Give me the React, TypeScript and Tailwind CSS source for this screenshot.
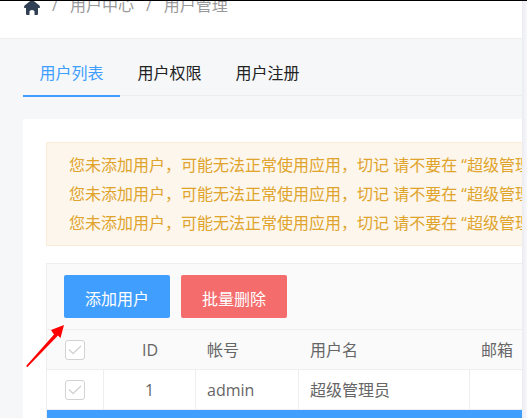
import { useState } from 'react';

type User = {
  id: number;
  account: string;
  name: string;
  email: string;
};

const TABS = ['用户列表', '用户权限', '用户注册'];

const NOTICES = [
  '您未添加用户，可能无法正常使用应用，切记 请不要在 “超级管理',
  '您未添加用户，可能无法正常使用应用，切记 请不要在 “超级管理',
  '您未添加用户，可能无法正常使用应用，切记 请不要在 “超级管理',
];

const USERS: User[] = [{ id: 1, account: 'admin', name: '超级管理员', email: '' }];

function HomeIcon() {
  return (
    <svg width="16" height="15" viewBox="0 0 16 15" fill="#304156" aria-hidden="true">
      <path d="M8 0Q8.600 0 9.200 .5L15.400 5.600Q16 6.200 16 7.200 16 8 15.200 8H14V14Q14 15 13 15H10.500V11.500Q10.500 10 8 10T5.500 11.500V15H3Q2 15 2 14V8H.8Q0 8 0 7.200 0 6.200 .6 5.600L6.800 .5Q7.400 0 8 0Z" />
    </svg>
  );
}

function RowCheckbox({ label }: { label: string }) {
  return (
    <label className="mx-auto grid size-5 place-items-center">
      <input
        type="checkbox"
        aria-label={label}
        className="col-start-1 row-start-1 size-5 appearance-none rounded-[3px] border border-[#d2d2d2] bg-white"
      />
      <svg
        width="14"
        height="10"
        viewBox="0 0 14 10"
        fill="none"
        stroke="#d2d2d2"
        strokeWidth="1.3"
        className="pointer-events-none col-start-1 row-start-1"
      >
        <path d="M1 4.500 5 8.500 13 1" />
      </svg>
    </label>
  );
}

export default function App() {
  const [activeTab, setActiveTab] = useState(0);

  return (
    <div className="flex min-h-screen flex-col border-t border-black bg-[#f5f7f9] font-['Open_Sans','Noto_Sans_CJK_SC',sans-serif] text-base text-[#666]">
      <div className="flex flex-1">
        <main className="min-w-0 flex-1 overflow-hidden">
          {/* Breadcrumb */}
          <header className="h-[38px] overflow-hidden border-b border-[#ebedef] bg-white pl-6">
            <nav className="-mt-2 flex h-6 items-center gap-3 whitespace-nowrap text-[#999]">
              <a href="#home" aria-label="首页" className="pt-1">
                <HomeIcon />
              </a>
              <span>/</span>
              <a href="#center">用户中心</a>
              <span>/</span>
              <a href="#users">用户管理</a>
            </nav>
          </header>

          <div className="pl-[23px]">
            {/* Tabs */}
            <div className="mt-3 flex h-[45px] gap-px border-b border-[#ebedef]">
              {TABS.map((tab, i) => (
                <button
                  key={tab}
                  type="button"
                  onClick={() => setActiveTab(i)}
                  className={
                    activeTab === i
                      ? 'h-[46px] w-[97px] border-b-2 border-[#409eff] text-[#409eff]'
                      : 'h-[46px] w-[97px] border-b-2 border-transparent text-[#222]'
                  }
                >
                  {tab}
                </button>
              ))}
            </div>

            <section className="mt-[23px] bg-white pt-[23px] pl-[23px]">
              {/* Warning notice */}
              <div className="border-y border-l border-[#faecd8] bg-[#fdf6ec] pt-2 pb-[7px] pl-[22px] text-[#e0a42c]">
                {NOTICES.map((text, i) => (
                  <p key={i} className="leading-[29px] whitespace-nowrap">
                    {text}
                  </p>
                ))}
              </div>

              <div className="mt-[17px] border-t border-l border-[#eee]">
                {/* Toolbar */}
                <div className="relative flex h-[66px] gap-[11px] border-b border-[#eee] bg-[#fafafa] pt-[11px] pl-[17px]">
                  <button type="button" className="h-[43px] w-[106px] rounded-xs bg-[#409eff] pt-1 text-white">
                    添加用户
                  </button>
                  <button type="button" className="h-[43px] w-[106px] rounded-xs bg-[#f56c6c] pt-1 text-white">
                    批量删除
                  </button>
                  <svg
                    width="40"
                    height="44"
                    viewBox="0 0 40 44"
                    fill="#f00"
                    className="pointer-events-none absolute top-[60px] -left-[22px]"
                    aria-hidden="true"
                  >
                    <path d="M39 1 35.500 14 33 11.500 2.500 43Q1 43 1.500 41.500L29 10.500 26 6Z" />
                  </svg>
                </div>

                <table className="w-full table-fixed border-separate border-spacing-0 text-left">
                  <colgroup>
                    <col className="w-[57px]" />
                    <col className="w-[92px]" />
                    <col className="w-[103px]" />
                    <col className="w-[171px]" />
                    <col />
                  </colgroup>
                  <thead className="bg-[#fafafa]">
                    <tr className="h-10">
                      <th className="border-b border-[#eee] pr-px">
                        <RowCheckbox label="全选" />
                      </th>
                      <th className="border-b border-[#eee] text-center font-normal">ID</th>
                      <th className="border-b border-[#eee] pl-[11px] font-normal">帐号</th>
                      <th className="border-b border-[#eee] pl-[11px] font-normal">用户名</th>
                      <th className="border-b border-[#eee] pl-[11px] font-normal">邮箱</th>
                    </tr>
                  </thead>
                  <tbody>
                    {USERS.map((user) => (
                      <tr key={user.id} className="h-10">
                        <td className="border-r border-b border-[#eee]">
                          <RowCheckbox label={user.name} />
                        </td>
                        <td className="border-r border-b border-[#eee] text-center">{user.id}</td>
                        <td className="border-r border-b border-[#eee] pl-[11px]">{user.account}</td>
                        <td className="border-r border-b border-[#eee] pl-[11px]">{user.name}</td>
                        <td className="border-b border-[#eee] pl-[11px]">{user.email}</td>
                      </tr>
                    ))}
                  </tbody>
                </table>
                <div className="h-2 bg-[#409eff]" />
              </div>
            </section>
          </div>
        </main>
        {/* Right gutter */}
        <div className="w-[5px] bg-linear-to-r from-[#ebecf1] to-[#f7f7fc]" />
      </div>
    </div>
  );
}
